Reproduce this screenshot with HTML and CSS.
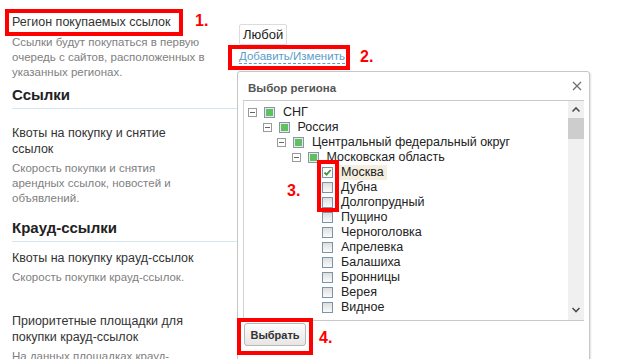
FILE: index.html
```html
<!DOCTYPE html>
<html lang="ru">

<head>
  <meta charset="UTF-8" />
  <title>Регион покупаемых ссылок</title>
  <link rel="stylesheet" href="styles.css">
</head>

<body>
  <div class="page">
    <!-- левая колонка с настройками -->
    <div class="side">
      <div class="opt opt-region">
        <div class="opt-title">Регион покупаемых ссылок</div>
        <p class="opt-desc">Ссылки будут покупаться в первую очередь с сайтов, расположенных в указанных регионах.</p>
      </div>

      <h2 class="group group-first">Ссылки</h2>
      <div class="opt">
        <div class="opt-title">Квоты на покупку и снятие ссылок</div>
        <p class="opt-desc">Скорость покупки и снятия арендных ссылок, новостей и объявлений.</p>
      </div>

      <h2 class="group">Крауд-ссылки</h2>
      <div class="opt opt-short">
        <div class="opt-title">Квоты на покупку крауд-ссылок</div>
        <p class="opt-desc">Скорость покупки крауд-ссылок.</p>
      </div>
      <div class="opt opt-next">
        <div class="opt-title">Приоритетные площадки для покупки крауд-ссылок</div>
        <p class="opt-desc">На данных площадках крауд-ссылки будут покупаться в первую очередь.</p>
      </div>
    </div>

    <!-- значение региона -->
    <div class="main">
      <div class="region-value">Любой</div><br />
      <a class="region-edit" href="#">Добавить/Изменить</a>
    </div>

    <!-- окно выбора региона -->
    <div class="dialog">
      <div class="dialog-head">
        <span>Выбор региона</span>
        <svg class="dialog-close" width="10" height="10" viewBox="0 0 10 10">
          <path d="M1 1 L9 9 M9 1 L1 9" stroke="#707070" stroke-width="1.3" fill="none" />
        </svg>
      </div>
      <div class="tree-box">
        <ul class="tree">
          <li class="lvl0"><i class="toggle"></i><i class="check part"></i><span>СНГ</span></li>
          <li class="lvl1"><i class="toggle"></i><i class="check part"></i><span>Россия</span></li>
          <li class="lvl2"><i class="toggle"></i><i class="check part"></i><span>Центральный федеральный округ</span></li>
          <li class="lvl3"><i class="toggle"></i><i class="check part"></i><span>Московская область</span></li>
          <li class="lvl4 selected"><i class="toggle none"></i><i class="check on">
              <svg width="9" height="9" viewBox="0 0 9 9">
                <path d="M1.5 4.5 L3.6 6.6 L7.6 2" stroke="#3d9a3d" stroke-width="1.8" fill="none" />
              </svg></i><span>Москва</span></li>
          <li class="lvl4"><i class="toggle none"></i><i class="check"></i><span>Дубна</span></li>
          <li class="lvl4"><i class="toggle none"></i><i class="check"></i><span>Долгопрудный</span></li>
          <li class="lvl4"><i class="toggle none"></i><i class="check"></i><span>Пущино</span></li>
          <li class="lvl4"><i class="toggle none"></i><i class="check"></i><span>Черноголовка</span></li>
          <li class="lvl4"><i class="toggle none"></i><i class="check"></i><span>Апрелевка</span></li>
          <li class="lvl4"><i class="toggle none"></i><i class="check"></i><span>Балашиха</span></li>
          <li class="lvl4"><i class="toggle none"></i><i class="check"></i><span>Бронницы</span></li>
          <li class="lvl4"><i class="toggle none"></i><i class="check"></i><span>Верея</span></li>
          <li class="lvl4"><i class="toggle none"></i><i class="check"></i><span>Видное</span></li>
        </ul>
        <!-- полоса прокрутки -->
        <div class="scroll">
          <svg class="scroll-arrow" width="16" height="17" viewBox="0 0 16 17">
            <path d="M4.5 10.5 L8 7 L11.5 10.5" stroke="#505050" stroke-width="1.6" fill="none" />
          </svg>
          <div class="scroll-thumb"></div>
          <svg class="scroll-arrow scroll-down" width="16" height="17" viewBox="0 0 16 17">
            <path d="M4.5 7 L8 10.5 L11.5 7" stroke="#505050" stroke-width="1.6" fill="none" />
          </svg>
        </div>
      </div>
      <div class="dialog-foot">
        <button class="btn">Выбрать</button>
      </div>
    </div>

    <!-- пометки к скриншоту -->
    <div class="mark mark-1"></div>
    <div class="mark mark-2"></div>
    <div class="mark mark-3"></div>
    <div class="mark mark-4"></div>
    <span class="mark-num num-1">1.</span>
    <span class="mark-num num-2">2.</span>
    <span class="mark-num num-3">3.</span>
    <span class="mark-num num-4">4.</span>
  </div>
</body>

</html>
```

FILE: styles.css
```css
* {
  margin: 0;
  padding: 0;
  box-sizing: border-box;
}

body {
  font-family: "Liberation Sans", Arial, sans-serif;
  color: #333;
  background: #fff;
}

ul {
  list-style: none;
}

.page {
  position: relative;
  display: flex;
  width: 624px;
  height: 359px;
  overflow: hidden;
}

/* левая колонка */
.side {
  width: 238px;
  padding: 14px 0 0 12px;
  flex-shrink: 0;
}

.opt {
  margin-top: 16px;
  padding-right: 30px;
}

.opt-region {
  margin-top: 0;
}

.opt-short {
  margin-top: 8px;
}

.opt-next {
  margin-top: 28px;
  padding-right: 40px;
}

.opt-title {
  font-size: 12.5px;
  line-height: 16px;
  color: #333;
}

.opt-desc {
  margin-top: 4px;
  font-size: 11.5px;
  line-height: 15px;
  color: #808080;
}

.opt-region .opt-desc {
  margin-top: 5px;
}

.group {
  margin-top: 12px;
  padding-bottom: 3px;
  font-size: 15px;
  line-height: 20px;
  font-weight: bold;
  color: #222;
  border-bottom: 1px solid #d6e6ef;
}

.group-first {
  margin-top: 5px;
}

/* правая часть */
.main {
  padding: 24px 0 0 1px;
}

.region-value {
  display: inline-block;
  height: 21px;
  padding: 0 3px;
  border: 1px solid #dcdcdc;
  border-radius: 2px;
  font-size: 13px;
  line-height: 19px;
  color: #222;
}

.region-edit {
  display: inline-block;
  margin-top: 5px;
  font-size: 11.5px;
  line-height: 13px;
  color: #5b9dc8;
  text-decoration: none;
  border-bottom: 1px dashed #5b9dc8;
  white-space: nowrap;
}

/* окно */
.dialog {
  position: absolute;
  left: 237px;
  top: 71px;
  width: 353px;
  height: 300px;
  background: #fff;
  border: 1px solid #c6c6c6;
  border-radius: 3px;
  box-shadow: 1px 1px 2px rgba(0, 0, 0, 0.12);
}

.dialog-head {
  height: 28px;
  display: flex;
  justify-content: space-between;
  align-items: center;
  padding: 3px 7px 0 10px;
  font-size: 11.5px;
  font-weight: bold;
  color: #555;
}

.dialog-close {
  margin-top: -3px;
}

.tree-box {
  display: flex;
  height: 221px;
  margin: 0 5px;
  border-top: 1px solid #c9c9c9;
  border-bottom: 1px solid #c9c9c9;
  border-left: 1px solid #d4d4d4;
}

.tree {
  flex: 1;
  padding-top: 4px;
  overflow: hidden;
}

.tree li {
  display: flex;
  align-items: center;
  height: 15px;
  font-size: 12.5px;
  color: #222;
  white-space: nowrap;
}

.tree .lvl0 { padding-left: 4px; }
.tree .lvl1 { padding-left: 18.5px; }
.tree .lvl2 { padding-left: 33px; }
.tree .lvl3 { padding-left: 47.5px; }
.tree .lvl4 { padding-left: 62px; }

.toggle {
  position: relative;
  width: 9px;
  height: 9px;
  margin-right: 7px;
  border: 1px solid #9a9a9a;
  background: #fff;
}

.toggle::after {
  content: "";
  position: absolute;
  left: 1px;
  right: 1px;
  top: 3px;
  height: 1px;
  background: #666;
}

.toggle.none {
  visibility: hidden;
}

.check {
  display: flex;
  align-items: center;
  justify-content: center;
  width: 11px;
  height: 11px;
  margin-right: 5px;
  border: 1px solid #7b93ab;
  background: linear-gradient(#dedede, #fafafa);
}

.check.part {
  padding: 1px;
  border-color: #8796a6;
  background: #5fc05f content-box;
  box-shadow: inset 0 0 0 1px #e8e8e8;
}

.check.on {
  background: #fff;
}

.tree li span {
  padding: 0 3px;
  line-height: 15px;
}

.tree .selected span {
  background: #f4efdf;
}

.scroll {
  position: relative;
  width: 16px;
  background: #f0f0f0;
}

.scroll-arrow {
  display: block;
}

.scroll-thumb {
  height: 21px;
  background: #cdcdcd;
}

.scroll-down {
  position: absolute;
  bottom: 2px;
  left: 0;
}

.dialog-foot {
  padding: 2px 6px;
}

.btn {
  width: 62px;
  height: 23px;
  border: 1px solid #b8b8b8;
  border-radius: 3px;
  background: linear-gradient(#fdfdfd, #e6e6e6);
  font: bold 11px "Liberation Sans", Arial, sans-serif;
  color: #333;
}

/* красные пометки */
.mark {
  position: absolute;
  border: 4px solid #f00;
}

.mark-1 { left: 5px; top: 9px; width: 178px; height: 27px; }
.mark-2 { left: 228px; top: 45px; width: 122px; height: 25px; }
.mark-3 { left: 317px; top: 160px; width: 22px; height: 52px; }
.mark-4 { left: 237px; top: 318px; width: 76px; height: 37px; }

.mark-num {
  position: absolute;
  font-size: 16px;
  line-height: 18px;
  font-weight: bold;
  color: #f00;
}

.num-1 { left: 195px; top: 12px; }
.num-2 { left: 360px; top: 48px; }
.num-3 { left: 287px; top: 182px; }
.num-4 { left: 319px; top: 329px; }
```
